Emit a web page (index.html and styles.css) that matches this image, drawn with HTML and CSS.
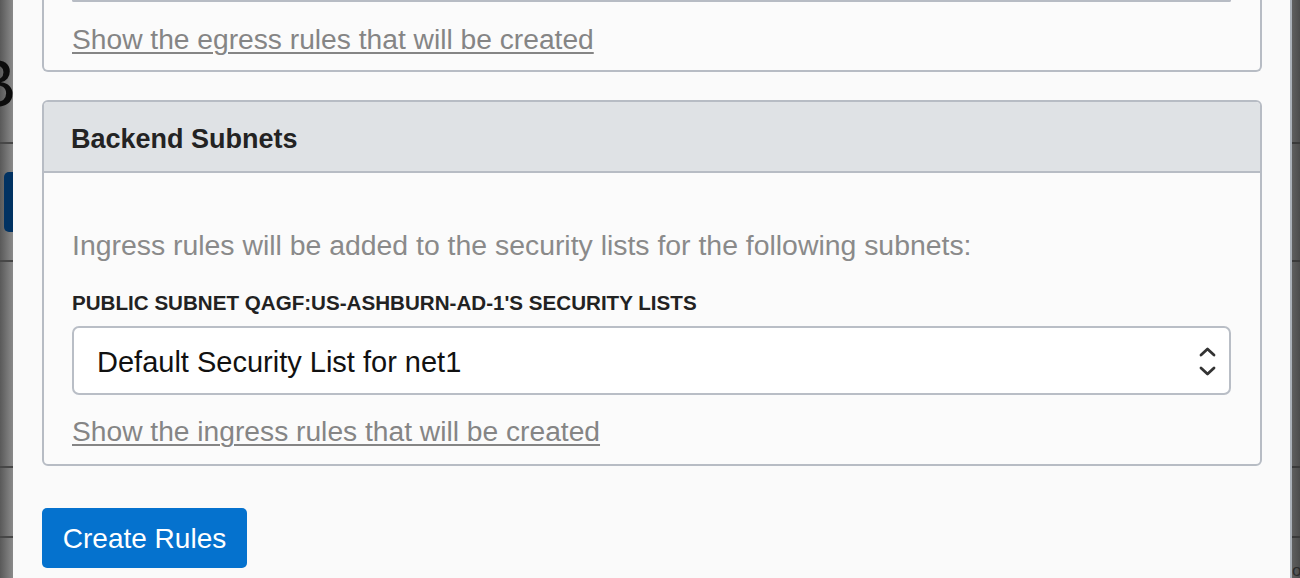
FILE: index.html
```html
<!DOCTYPE html>
<html lang="en">
<head>
<meta charset="utf-8">
<title>Create Rules</title>
<link rel="stylesheet" href="styles.css">
</head>
<body>
<div class="page">
  <div class="strip strip-left">
    <div class="seg seg-1"><span class="bd-title">B</span></div>
    <div class="seg seg-2"><span class="bd-btn"></span></div>
    <div class="seg seg-3"></div>
    <div class="seg seg-4"></div>
    <div class="seg seg-5"></div>
  </div>

  <div class="modal">
    <div class="card card-top">
      <div class="select-tail"></div>
      <a class="rules-link" href="#">Show the egress rules that will be created</a>
    </div>

    <div class="card card-backend">
      <div class="card-header">Backend Subnets</div>
      <div class="card-body">
        <p class="hint">Ingress rules will be added to the security lists for the following subnets:</p>
        <div class="field-label">PUBLIC SUBNET QAGF:US-ASHBURN-AD-1'S SECURITY LISTS</div>
        <div class="select">
          <span class="select-value">Default Security List for net1</span>
          <svg class="select-arrows" width="17" height="32" viewBox="0 0 17 32" aria-hidden="true">
            <path d="M2 10 L8.5 4 L15 10" fill="none" stroke="#333" stroke-width="2.8" stroke-linecap="round" stroke-linejoin="round"/>
            <path d="M2 23 L8.5 29 L15 23" fill="none" stroke="#333" stroke-width="2.8" stroke-linecap="round" stroke-linejoin="round"/>
          </svg>
        </div>
        <a class="rules-link" href="#">Show the ingress rules that will be created</a>
      </div>
    </div>

    <div class="actions">
      <button class="btn-primary" type="button">Create Rules</button>
    </div>
  </div>

  <div class="strip strip-right">
    <div class="seg seg-1"></div>
    <div class="seg seg-2"></div>
    <div class="seg seg-3"></div>
    <div class="seg seg-4"></div>
    <div class="seg seg-5"><span class="bd-glyph">o</span></div>
  </div>
</div>
</body>
</html>
```

FILE: styles.css
```css
* { box-sizing: border-box; }

html, body {
  margin: 0;
  padding: 0;
  height: 578px;
  overflow: hidden;
}

body {
  font-family: "Liberation Sans", Arial, sans-serif;
  background: #6e6e6e;
}

.page {
  display: flex;
  height: 578px;
  width: 1300px;
}

/* dimmed page behind the dialog */
.strip {
  display: flex;
  flex-direction: column;
  overflow: hidden;
  flex: none;
}

.strip-left {
  width: 13px;
  background: linear-gradient(90deg, #595959 0%, #7c7c7c 70%, #8a8a8a 100%);
}

.strip-right {
  width: 8px;
  background: linear-gradient(90deg, #5f5f5f 0%, #4c4c4c 100%);
}

.seg {
  flex: none;
  border-bottom: 2px solid #474747;
}

.strip-right .seg { border-bottom-color: #3a3a3a; }

.seg-1 { height: 144px; padding-top: 49px; display: flex; justify-content: flex-end; overflow: hidden; }
.seg-2 { height: 118px; padding-top: 28px; }
.seg-3 { height: 206px; }
.seg-4 { height: 70px; }
.seg-5 { flex: 1; border-bottom: none; display: flex; align-items: flex-end; }

.bd-title {
  font-size: 68px;
  line-height: 68px;
  color: #0c0c0c;
  margin-right: -3px;
  white-space: nowrap;
}

.bd-btn {
  display: block;
  width: 9px;
  height: 60px;
  margin-left: 4px;
  background: #013262;
  border-radius: 5px 0 0 5px;
}

.bd-glyph {
  font-size: 17px;
  line-height: 14px;
  color: #2c2c2c;
}

/* dialog */
.modal {
  flex: none;
  width: 1279px;
  background: #fafafa;
  border-right: 2px solid #aab0b8;
  padding: 0 28px 0 29px;
  display: flex;
  flex-direction: column;
}

.card {
  border: 2px solid #b7bcc4;
  border-radius: 6px;
  background: #fbfbfb;
}

.card-top {
  border-top: none;
  border-radius: 0 0 6px 6px;
  padding: 0 29px 0 28px;
  height: 72px;
}

.select-tail {
  height: 2px;
  border: 2px solid #b7bcc4;
  border-top: none;
  border-radius: 0 0 6px 6px;
}

.rules-link {
  display: block;
  width: max-content;
  font-size: 28.2px;
  line-height: 32px;
  color: #858585;
  text-decoration: underline;
  text-decoration-thickness: 1.5px;
  text-underline-offset: 3px;
}

.card-top .rules-link { margin-top: 21px; }

.card-backend {
  margin-top: 28px;
  overflow: hidden;
}

.card-header {
  height: 71px;
  padding: 6px 0 0 27px;
  line-height: 63px;
  font-size: 27px;
  font-weight: bold;
  color: #232323;
  background: #dfe2e5;
  border-bottom: 2px solid #b7bcc4;
}

.card-body {
  padding: 56px 29px 17px 28px;
}

.hint {
  margin: 0;
  font-size: 28.4px;
  line-height: 32px;
  color: #8a8a8a;
}

.field-label {
  margin-top: 30px;
  font-size: 20.6px;
  line-height: 24px;
  font-weight: bold;
  color: #222;
}

.select {
  margin-top: 11px;
  height: 69px;
  border: 2px solid #b9bec6;
  border-radius: 7px;
  background: #ffffff;
  display: flex;
  align-items: center;
  justify-content: space-between;
  padding: 3px 13px 0 23px;
}

.select-value {
  font-size: 29px;
  line-height: 32px;
  color: #111;
}

.select-arrows { display: block; flex: none; margin-top: -3px; }

.card-body .rules-link { margin-top: 20px; }

.actions {
  margin-top: 42px;
  display: flex;
}

.btn-primary {
  height: 60px;
  width: 205px;
  padding: 2px 0 0;
  border: none;
  border-radius: 5px;
  background: #0572ce;
  color: #ffffff;
  font-family: "Liberation Sans", Arial, sans-serif;
  font-size: 28px;
  line-height: 58px;
  text-align: center;
}
```
